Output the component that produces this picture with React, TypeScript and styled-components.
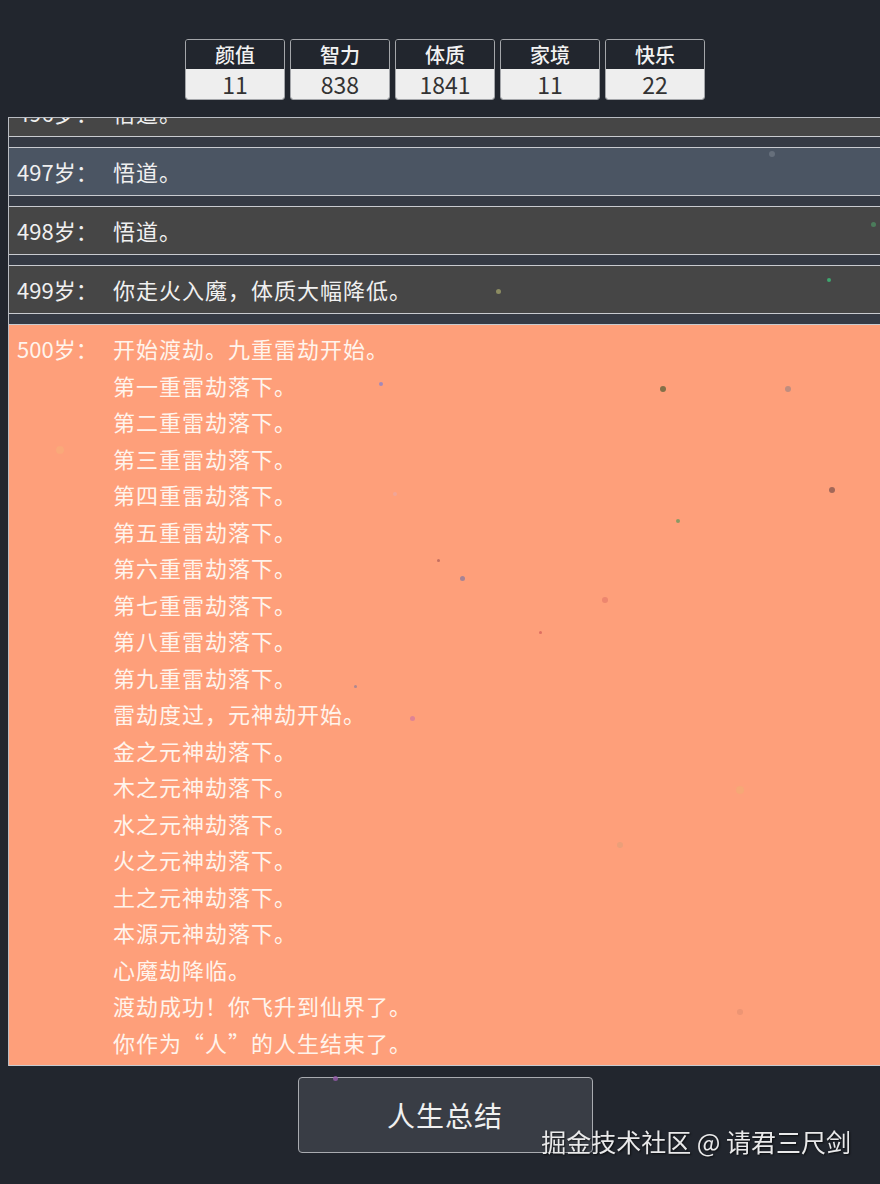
import React, { useLayoutEffect, useRef } from 'react'
import styled, { createGlobalStyle } from 'styled-components'

const GlobalStyle = createGlobalStyle`
  html, body {
    margin: 0;
    background: #22262e;
    overflow: hidden;
  }
  body {
    font-family: "Noto Sans CJK SC", "Noto Sans", sans-serif;
    color: #eeeeee;
  }
`

type Grade = 0 | 1 | 2 | 3

interface LogEntry {
  age: number
  grade: Grade
  lines: string[]
}

const gradeBackground: Record<Grade, string> = {
  0: '#464646',
  1: '#4b5563',
  2: '#6b4f87',
  3: '#fe9f7a',
}

const Screen = styled.div`
  position: relative;
  width: 880px;
  height: 1184px;
  overflow: hidden;
`

const Page = styled.main`
  width: 874px;
  margin-left: 8px;
  padding-top: 39px;
  display: flex;
  flex-direction: column;
  align-items: center;
`

const StatRow = styled.div`
  display: flex;
  gap: 5px;
  margin-bottom: 17px;
`

const StatBox = styled.div`
  width: 100px;
  box-sizing: border-box;
  border: 1px solid #a4a6aa;
  border-radius: 3px;
  overflow: hidden;
  display: flex;
  flex-direction: column;
`

const StatLabel = styled.div`
  height: 29px;
  background: #22262e;
  color: #f2f2f2;
  font-size: 20px;
  font-weight: 500;
  line-height: 29px;
  text-align: center;
`

const StatValue = styled.div`
  height: 30px;
  background: #eeeeee;
  color: #333333;
  font-size: 23px;
  line-height: 30px;
  text-align: center;
`

const LogList = styled.ul`
  align-self: stretch;
  box-sizing: border-box;
  height: 949px;
  margin: 0;
  padding: 0;
  list-style: none;
  background: #353a44;
  border: 1px solid #b9bcc2;
  border-bottom: none;
  overflow-y: auto;
  scrollbar-width: none;
  display: flex;
  flex-direction: column;
  gap: 10.5px;

  &::-webkit-scrollbar {
    display: none;
  }
`

const LogItem = styled.li<{ $grade: Grade }>`
  display: flex;
  flex-shrink: 0;
  padding: 5px 8px;
  background: ${({ $grade }) => gradeBackground[$grade]};
  border-top: 1px solid #c9cbd0;
  border-bottom: 1px solid #c9cbd0;
  color: ${({ $grade }) => ($grade === 3 ? '#fff4ec' : '#f0f0f0')};
  font-size: 22px;
  line-height: 36.5px;
`

const AgeLabel = styled.span`
  flex: 0 0 96px;
`

const LogText = styled.div`
  display: flex;
  flex-direction: column;
  letter-spacing: 1px;
`

const SummaryButton = styled.button`
  margin-top: 11px;
  width: 295px;
  height: 76px;
  background: #393d45;
  border: 1px solid #a9abb0;
  border-radius: 4px;
  color: #f0f0f0;
  font-family: inherit;
  font-size: 28px;
  letter-spacing: 1px;
  cursor: pointer;
`

const Watermark = styled.div`
  position: absolute;
  right: 29px;
  top: 1123px;
  font-size: 25px;
  color: #e9e9ea;
  text-shadow: 1px 1px 2px rgba(0, 0, 0, 0.7);
  pointer-events: none;
`

// floating particles drawn over the page
const ParticleLayer = styled.div`
  position: absolute;
  inset: 0;
  pointer-events: none;
`

const Particle = styled.span<{ $size: number; $color: string }>`
  position: absolute;
  width: ${({ $size }) => $size}px;
  height: ${({ $size }) => $size}px;
  border-radius: 50%;
  background: ${({ $color }) => $color};
  filter: blur(0.6px);
`

const particles = [
  { x: 772, y: 154, s: 6, c: 'rgba(120,128,140,0.6)' },
  { x: 873, y: 224, s: 5, c: 'rgba(80,170,110,0.55)' },
  { x: 829, y: 280, s: 4, c: 'rgba(60,190,120,0.8)' },
  { x: 498, y: 291, s: 5, c: 'rgba(170,170,110,0.7)' },
  { x: 381, y: 384, s: 4, c: 'rgba(140,130,200,0.8)' },
  { x: 663, y: 389, s: 6, c: 'rgba(100,100,60,0.8)' },
  { x: 788, y: 389, s: 6, c: 'rgba(150,130,130,0.6)' },
  { x: 832, y: 490, s: 6, c: 'rgba(140,90,80,0.8)' },
  { x: 678, y: 521, s: 4, c: 'rgba(90,150,90,0.7)' },
  { x: 395, y: 494, s: 4, c: 'rgba(230,170,170,0.6)' },
  { x: 462, y: 578, s: 5, c: 'rgba(130,120,160,0.7)' },
  { x: 605, y: 600, s: 6, c: 'rgba(220,110,100,0.5)' },
  { x: 540, y: 632, s: 3, c: 'rgba(200,80,80,0.6)' },
  { x: 412, y: 718, s: 5, c: 'rgba(210,120,160,0.7)' },
  { x: 355, y: 686, s: 3, c: 'rgba(120,120,160,0.6)' },
  { x: 438, y: 560, s: 3, c: 'rgba(160,80,80,0.6)' },
  { x: 740, y: 1012, s: 6, c: 'rgba(220,140,110,0.5)' },
  { x: 740, y: 790, s: 8, c: 'rgba(230,190,110,0.3)' },
  { x: 60, y: 450, s: 8, c: 'rgba(240,200,120,0.25)' },
  { x: 620, y: 845, s: 6, c: 'rgba(200,160,120,0.35)' },
  { x: 335, y: 1078, s: 5, c: 'rgba(150,90,170,0.8)' },
]

const stats = [
  { label: '颜值', value: 11 },
  { label: '智力', value: 838 },
  { label: '体质', value: 1841 },
  { label: '家境', value: 11 },
  { label: '快乐', value: 22 },
]

const log: LogEntry[] = [
  { age: 495, grade: 0, lines: ['悟道。'] },
  { age: 496, grade: 0, lines: ['悟道。'] },
  { age: 497, grade: 1, lines: ['悟道。'] },
  { age: 498, grade: 0, lines: ['悟道。'] },
  { age: 499, grade: 0, lines: ['你走火入魔，体质大幅降低。'] },
  {
    age: 500,
    grade: 3,
    lines: [
      '开始渡劫。九重雷劫开始。',
      '第一重雷劫落下。',
      '第二重雷劫落下。',
      '第三重雷劫落下。',
      '第四重雷劫落下。',
      '第五重雷劫落下。',
      '第六重雷劫落下。',
      '第七重雷劫落下。',
      '第八重雷劫落下。',
      '第九重雷劫落下。',
      '雷劫度过，元神劫开始。',
      '金之元神劫落下。',
      '木之元神劫落下。',
      '水之元神劫落下。',
      '火之元神劫落下。',
      '土之元神劫落下。',
      '本源元神劫落下。',
      '心魔劫降临。',
      '渡劫成功！你飞升到仙界了。',
      '你作为“人”的人生结束了。',
    ],
  },
]

export default function App() {
  const listRef = useRef<HTMLUListElement>(null)

  // keep the newest year in view
  useLayoutEffect(() => {
    const el = listRef.current
    if (el) el.scrollTop = el.scrollHeight
  }, [])

  return (
    <Screen>
      <GlobalStyle />
      <Page>
        <StatRow>
          {stats.map((s) => (
            <StatBox key={s.label}>
              <StatLabel>{s.label}</StatLabel>
              <StatValue>{s.value}</StatValue>
            </StatBox>
          ))}
        </StatRow>
        <LogList ref={listRef}>
          {log.map((entry) => (
            <LogItem key={entry.age} $grade={entry.grade}>
              <AgeLabel>{entry.age}岁：</AgeLabel>
              <LogText>
                {entry.lines.map((line, i) => (
                  <span key={i}>{line}</span>
                ))}
              </LogText>
            </LogItem>
          ))}
        </LogList>
        <SummaryButton>人生总结</SummaryButton>
      </Page>
      <ParticleLayer>
        {particles.map((p, i) => (
          <Particle key={i} $size={p.s} $color={p.c} style={{ left: p.x - p.s / 2, top: p.y - p.s / 2 }} />
        ))}
      </ParticleLayer>
      <Watermark>掘金技术社区 @ 请君三尺剑</Watermark>
    </Screen>
  )
}
